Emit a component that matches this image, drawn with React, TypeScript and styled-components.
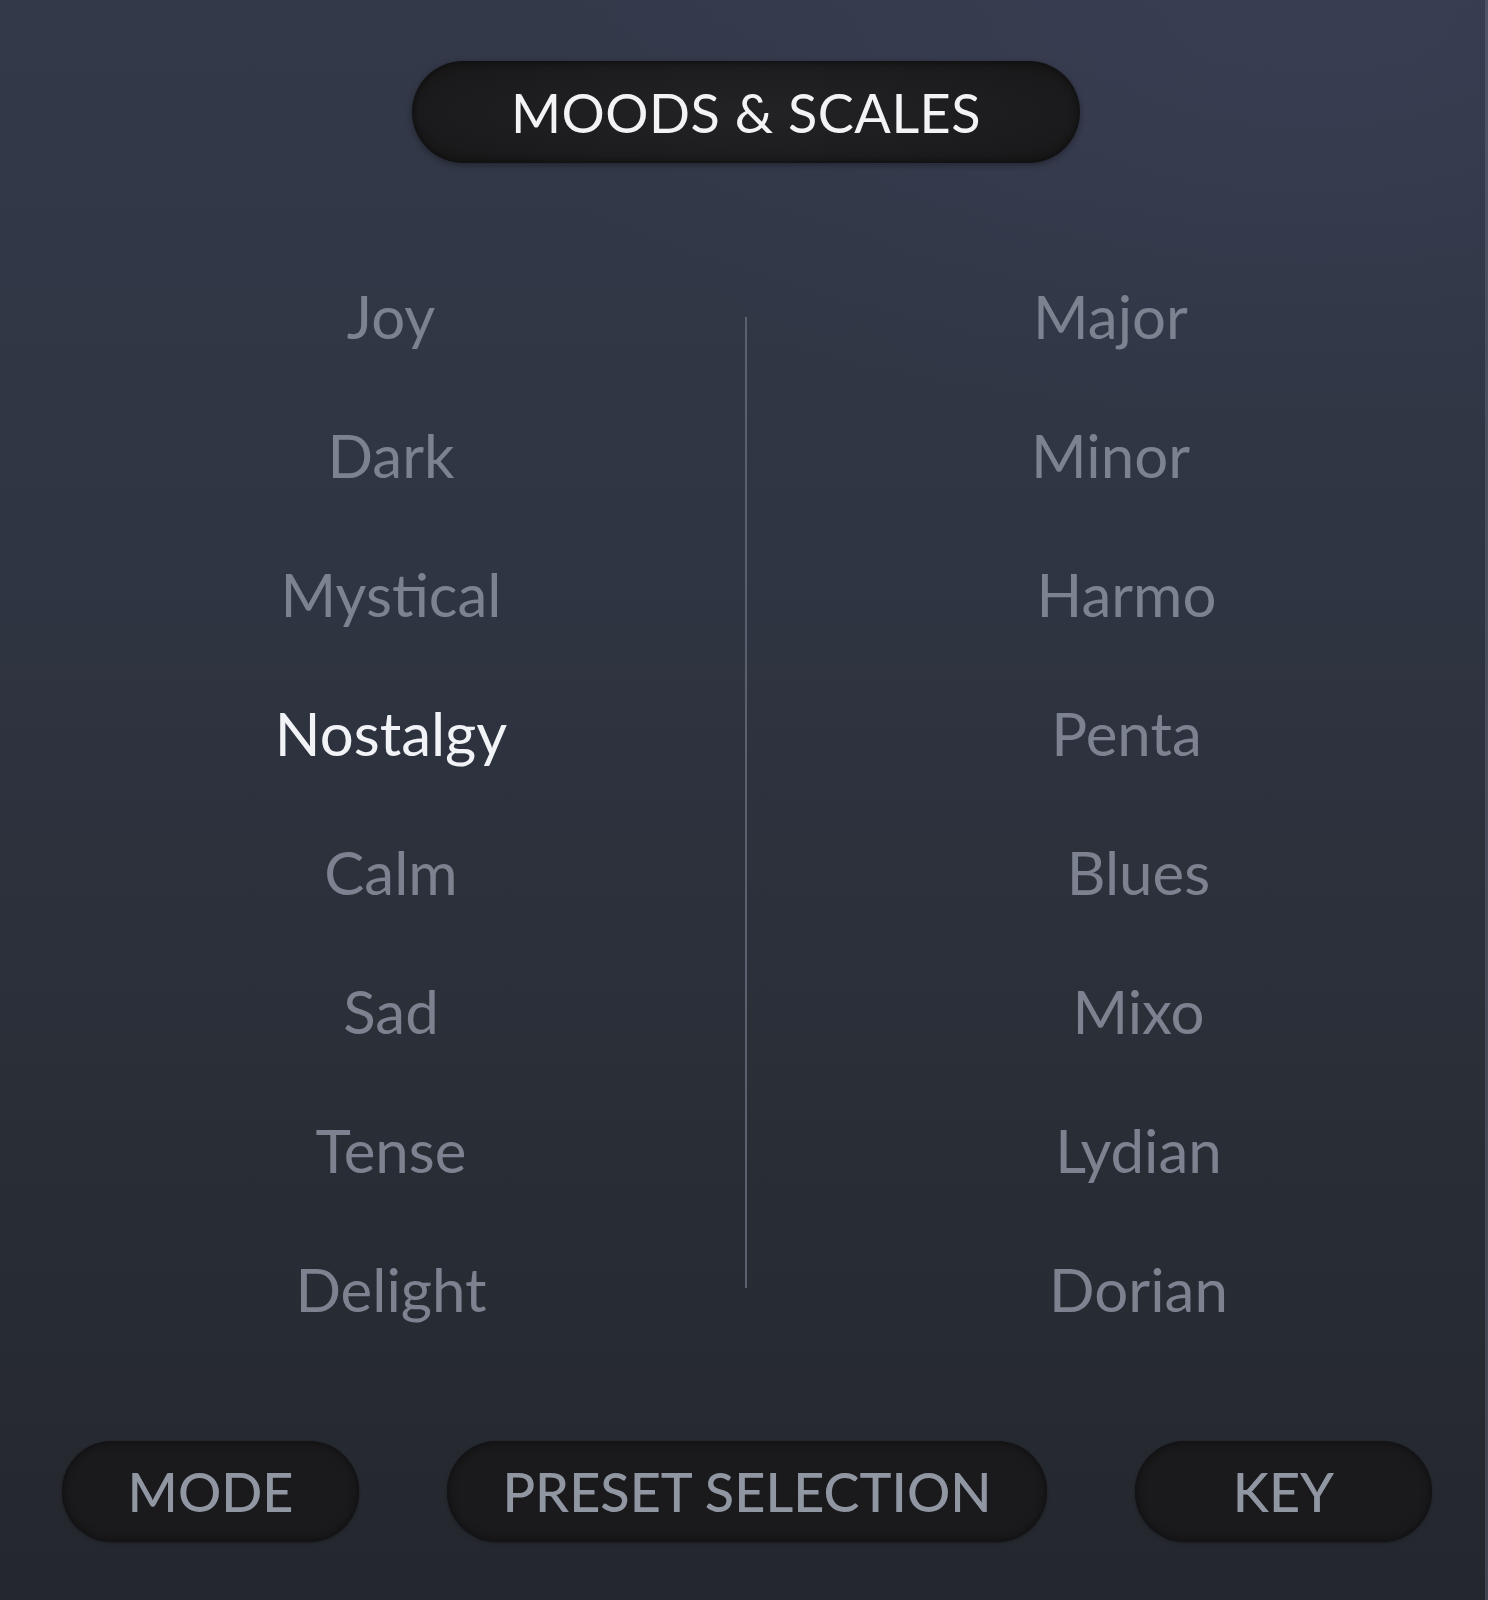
import React from 'react'
import styled, { createGlobalStyle } from 'styled-components'

interface ItemTypes {
  label: string
  shift?: number
  active?: boolean
}

const moods: ItemTypes[] = [
  { label: 'Joy' },
  { label: 'Dark' },
  { label: 'Mystical' },
  { label: 'Nostalgy', active: true },
  { label: 'Calm' },
  { label: 'Sad' },
  { label: 'Tense' },
  { label: 'Delight' },
]

const scales: ItemTypes[] = [
  { label: 'Major', shift: -16 },
  { label: 'Minor', shift: -16 },
  { label: 'Harmo' },
  { label: 'Penta' },
  { label: 'Blues', shift: 12 },
  { label: 'Mixo', shift: 12 },
  { label: 'Lydian', shift: 12 },
  { label: 'Dorian', shift: 12 },
]

function App() {
  return (
    <>
      <GlobalStyle />
      <Panel>
        <Header>
          <TitlePill>MOODS &amp; SCALES</TitlePill>
        </Header>
        <Lists>
          <Column $pad={37}>
            {moods.map((item) => (
              <Item key={item.label} $active={item.active}>
                {item.label}
              </Item>
            ))}
          </Column>
          <Divider />
          <Column $pad={18}>
            {scales.map((item) => (
              <Item key={item.label} $shift={item.shift}>
                {item.label}
              </Item>
            ))}
          </Column>
        </Lists>
        <Footer>
          <FooterButton $width={297}>MODE</FooterButton>
          <FooterButton $width={600}>PRESET SELECTION</FooterButton>
          <FooterButton $width={297}>KEY</FooterButton>
        </Footer>
      </Panel>
    </>
  )
}

const GlobalStyle = createGlobalStyle`
  html, body {
    margin: 0;
    padding: 0;
    background: #23262c;
  }
  body {
    font-family: Lato, 'Open Sans', sans-serif;
  }
`

const Panel = styled.div`
  width: 1488px;
  height: 1600px;
  box-sizing: border-box;
  display: flex;
  flex-direction: column;
  background:
    radial-gradient(ellipse 55% 28% at 88% 0%, rgba(66, 68, 98, 0.4), transparent 100%),
    linear-gradient(180deg, #333949 0%, #2f3542 35%, #2a2f38 65%, #24272d 100%);
  box-shadow: inset -3px 0 0 rgba(120, 126, 142, 0.35);
  overflow: hidden;
`

const Header = styled.div`
  display: flex;
  justify-content: center;
  padding-top: 61px;
  padding-left: 4px;
`

const TitlePill = styled.div`
  width: 668px;
  height: 102px;
  border-radius: 51px;
  display: flex;
  align-items: center;
  justify-content: center;
  background: radial-gradient(ellipse 70% 80% at 50% 50%, #232325 0%, #1c1c1e 60%, #161617 100%);
  box-shadow: 0 2px 6px rgba(0, 0, 0, 0.35), inset 0 0 10px rgba(0, 0, 0, 0.6);
  color: #f3f3f6;
  font-size: 54px;
  font-weight: 400;
  letter-spacing: 0.5px;
  box-sizing: border-box;
`

const Lists = styled.div`
  display: grid;
  grid-template-columns: 745px 2px 1fr;
  margin-top: 83px;
`

const Column = styled.div<{ $pad: number }>`
  display: grid;
  grid-auto-rows: 139px;
  padding-left: ${(p) => p.$pad}px;
`

const Item = styled.div<{ $active?: boolean; $shift?: number }>`
  display: flex;
  align-items: center;
  justify-content: center;
  font-size: 60px;
  font-weight: 400;
  color: ${(p) => (p.$active ? '#f1f3f7' : '#7c828f')};
  transform: translateX(${(p) => p.$shift || 0}px);
`

const Divider = styled.div`
  width: 2px;
  background: #5a606e;
  margin: 71px 0 70px;
`

const Footer = styled.div`
  display: flex;
  justify-content: center;
  gap: 88px;
  margin-top: 83px;
  padding-left: 6px;
`

const FooterButton = styled.div<{ $width: number }>`
  width: ${(p) => p.$width}px;
  height: 101px;
  border-radius: 50px;
  display: flex;
  align-items: center;
  justify-content: center;
  background: #1a1a1c;
  box-shadow: inset 0 0 10px rgba(0, 0, 0, 0.55), 0 1px 3px rgba(0, 0, 0, 0.3);
  color: #9097a3;
  font-size: 54px;
  font-weight: 500;
  box-sizing: border-box;
`

export default App
